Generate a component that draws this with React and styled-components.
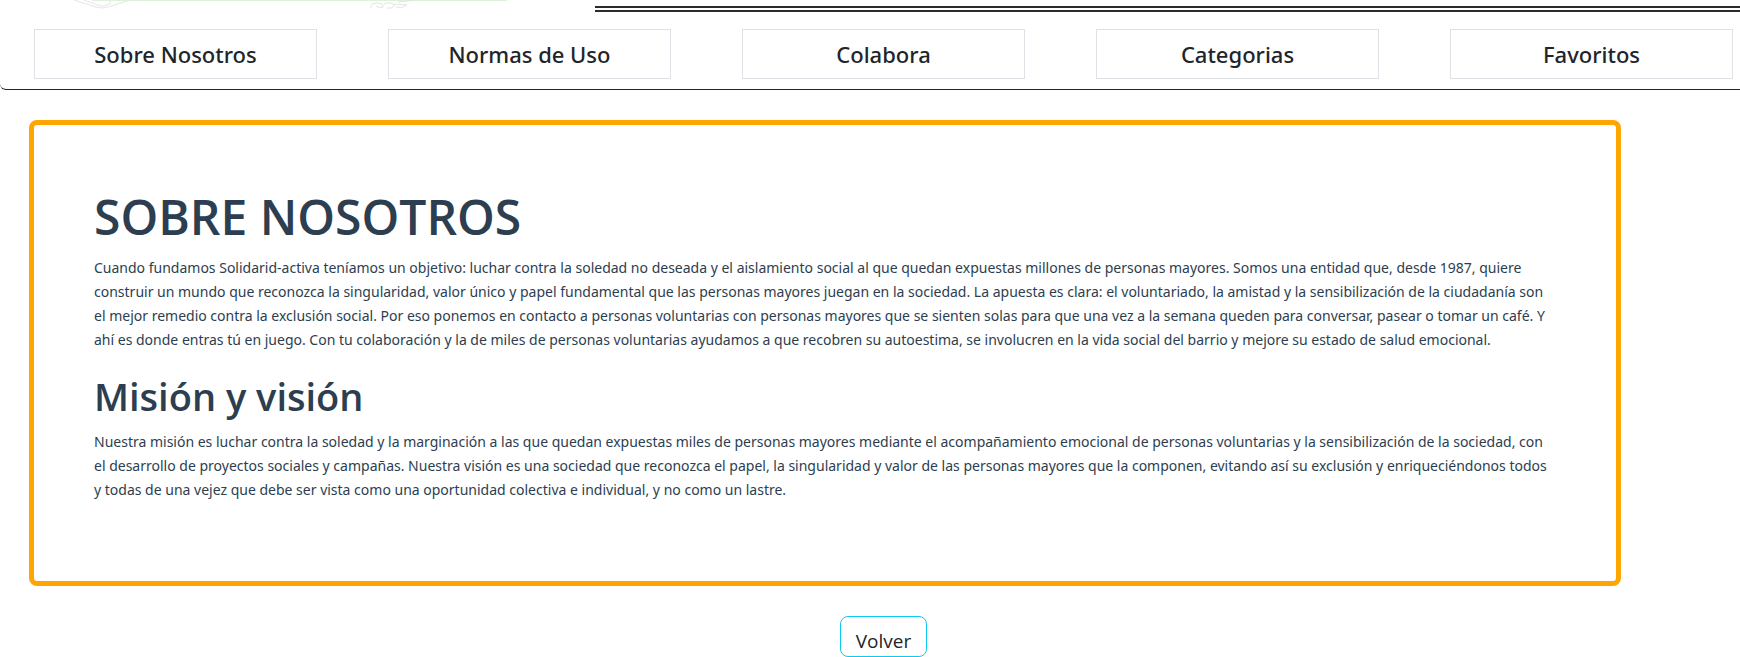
import React from "react";
import styled, { createGlobalStyle } from "styled-components";

const GlobalStyle = createGlobalStyle`
  *, *::before, *::after { box-sizing: border-box; }
  body {
    margin: 0;
    background: #fff;
    color: #212529;
    font-family: "Noto Sans", "Open Sans", sans-serif;
    font-size: 14px;
    line-height: 24px;
  }
`;

const Header = styled.header`
  border-bottom: 1px solid #212529;
  border-bottom-left-radius: 6px;
`;

const Banner = styled.div`
  display: flex;
  align-items: flex-end;
`;

const Logo = styled.svg`
  display: block;
  flex: none;
  width: 595px;
  height: 12px;
`;

const BannerRule = styled.div`
  flex: 1;
  border-bottom: 6px double #2b2b2b;
`;

const Nav = styled.nav`
  display: grid;
  grid-template-columns: repeat(5, 1fr);
  gap: 71px;
  padding: 17px 7px 10px 34px;
`;

const NavLink = styled.a`
  display: flex;
  align-items: center;
  justify-content: center;
  height: 50px;
  border: 1px solid #dee2e6;
  color: #212529;
  font-size: 22px;
  font-weight: 500;
  line-height: 30px;
  text-decoration: none;
  white-space: nowrap;
`;

const Card = styled.main`
  margin: 30px 119px 30px 29px;
  padding: 62px 60px 59px;
  border: 5px solid orange;
  border-radius: 8px;
  color: #2c3e50;
`;

const Title = styled.h1`
  margin: 0 0 9px;
  font-family: "Open Sans", "Noto Sans", sans-serif;
  font-size: 48px;
  font-weight: 600;
  line-height: 60px;
`;

const Subtitle = styled.h2`
  margin: 0 0 10px;
  font-family: "Open Sans", "Noto Sans", sans-serif;
  font-size: 38px;
  font-weight: 600;
  line-height: 48px;
`;

const Paragraph = styled.p`
  margin: 0 0 20px;
`;

const Actions = styled.div`
  display: flex;
  justify-content: center;
  padding-left: 27px;
`;

const BackButton = styled.button`
  padding: 10px 15px 1px;
  border: 1px solid #0dcaf0;
  border-radius: 8px;
  background: #fff;
  color: #212529;
  font-family: "Open Sans", "Noto Sans", sans-serif;
  font-size: 19px;
  line-height: 28px;
  cursor: pointer;
`;

const links = ["Sobre Nosotros", "Normas de Uso", "Colabora", "Categorias", "Favoritos"];

export default function App() {
  return (
    <>
      <GlobalStyle />
      <Header>
        <Banner>
          <Logo viewBox="0 0 595 12" fill="none" aria-hidden="true">
            <path d="M92 0.5H507" stroke="#dcf3d9" />
            <path d="M74 0L96 7Q102 9 108 7L130 0M84 0L98 5Q102 7 107 5L110 4V0" stroke="#e6e6e6" />
            <path
              d="M371 8Q370 3 377 3Q384 3 383 7Q379 9 376 6M384 4Q391 1 394 5Q393 9 387 8M394 4L407 5Q402 9 396 7M398 2L416 0"
              stroke="#e3e3e3"
            />
          </Logo>
          <BannerRule />
        </Banner>
        <Nav>
          {links.map((label) => (
            <NavLink key={label} href="#">{label}</NavLink>
          ))}
        </Nav>
      </Header>
      <Card>
        <Title>SOBRE NOSOTROS</Title>
        <Paragraph>
          Cuando fundamos Solidarid-activa teníamos un objetivo: luchar contra la soledad no deseada y el
          aislamiento social al que quedan expuestas millones de personas mayores. Somos una entidad que,
          desde 1987, quiere construir un mundo que reconozca la singularidad, valor único y papel
          fundamental que las personas mayores juegan en la sociedad. La apuesta es clara: el voluntariado,
          la amistad y la sensibilización de la ciudadanía son el mejor remedio contra la exclusión social.
          Por eso ponemos en contacto a personas voluntarias con personas mayores que se sienten solas para
          que una vez a la semana queden para conversar, pasear o tomar un café. Y ahí es donde entras tú en
          juego. Con tu colaboración y la de miles de personas voluntarias ayudamos a que recobren su
          autoestima, se involucren en la vida social del barrio y mejore su estado de salud emocional.
        </Paragraph>
        <Subtitle>Misión y visión</Subtitle>
        <Paragraph>
          Nuestra misión es luchar contra la soledad y la marginación a las que quedan expuestas miles de
          personas mayores mediante el acompañamiento emocional de personas voluntarias y la sensibilización
          de la sociedad, con el desarrollo de proyectos sociales y campañas. Nuestra visión es una sociedad
          que reconozca el papel, la singularidad y valor de las personas mayores que la componen, evitando
          así su exclusión y enriqueciéndonos todos y todas de una vejez que debe ser vista como una
          oportunidad colectiva e individual, y no como un lastre.
        </Paragraph>
      </Card>
      <Actions>
        <BackButton type="button">Volver</BackButton>
      </Actions>
    </>
  );
}
